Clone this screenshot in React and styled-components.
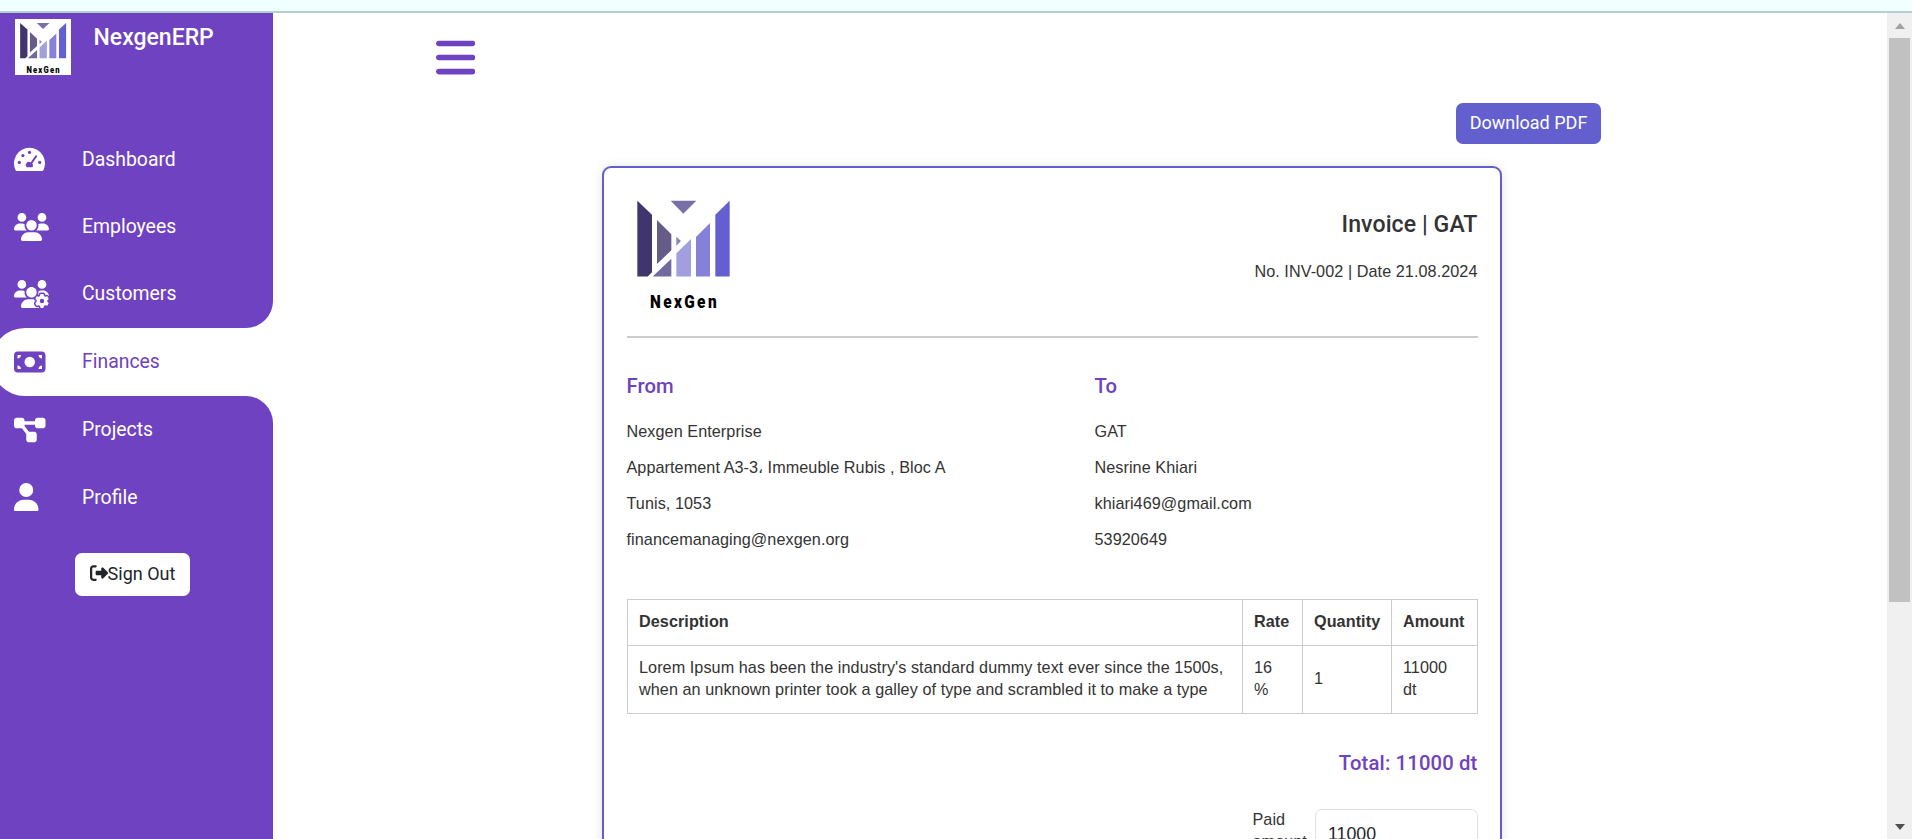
import React from "react";
import styled, { createGlobalStyle } from "styled-components";
import {
  FaUsers,
  FaUsersGear,
  FaMoneyBill,
  FaDiagramProject,
  FaUser,
  FaRightFromBracket,
  FaBars,
} from "react-icons/fa6";

const PURPLE = "#6f42c1";
const INDIGO = "#635fcf";

const GlobalStyle = createGlobalStyle`
  *, *::before, *::after { box-sizing: border-box; }
  html, body { margin: 0; height: 100%; overflow: hidden; background: #fff; }
  body { font-family: Roboto, "Liberation Sans", sans-serif; }
  h1, h2, p { margin: 0; }
`;

const Page = styled.div`
  display: flex;
  flex-direction: column;
  width: 1912px;
  height: 839px;
  overflow: hidden;
`;

const TopStrip = styled.div`
  flex: none;
  height: 13px;
  background: #f0ffff;
  border-bottom: 2px solid #b5cfcc;
`;

const Body = styled.div`
  display: flex;
  flex: 1;
  min-height: 0;
`;

const Sidebar = styled.aside`
  flex: none;
  display: flex;
  flex-direction: column;
  width: 273px;
  background: #fff;
`;

const SideTop = styled.div`
  height: 315px;
  background: ${PURPLE};
  border-bottom-right-radius: 27px;
`;

const SideBottom = styled.div`
  flex: 1;
  background: ${PURPLE};
  border-top-right-radius: 27px;
`;

const Brand = styled.div`
  display: flex;
  gap: 22.5px;
  height: 112.5px;
  padding: 6px 0 0 15px;
`;

const BrandName = styled.h1`
  padding-top: 5px;
  color: #fff;
  font-size: 23px;
  line-height: 27px;
  font-weight: 500;
`;

const NavItem = styled.a`
  display: flex;
  align-items: center;
  height: 67.4px;
  padding-left: 14px;
  color: #fff;
  font-size: 19.4px;
`;

const ActiveRow = styled.div`
  height: 68px;
  background: ${PURPLE};
  overflow: hidden;
`;

const ActivePill = styled(NavItem)`
  height: 68px;
  margin-left: -9px;
  padding: 0 0 1px 23px;
  border-radius: 34px 0 0 34px;
  background: #fff;
  color: ${PURPLE};
`;

const NavIcon = styled.span`
  display: flex;
  flex: none;
  align-items: center;
  width: 68px;

  svg {
    flex: none;
    width: ${(p) => p.$width}px;
    height: ${(p) => p.$height || 28}px;
  }
`;

const SignOut = styled.button`
  display: flex;
  align-items: center;
  justify-content: center;
  width: 115px;
  height: 43px;
  margin: 22.2px 0 0 75px;
  padding: 0 0 2px;
  border: 0;
  border-radius: 6.75px;
  background: #fff;
  color: #212529;
  font: 400 18px/27px Roboto, sans-serif;
`;

const Main = styled.main`
  flex: 1;
  min-width: 0;
  display: flex;
  flex-direction: column;
  overflow: hidden;
`;

const MenuToggle = styled.button`
  display: flex;
  flex: none;
  width: 40px;
  height: 45px;
  margin: 22px 0 0 162.5px;
  padding: 0;
  border: 0;
  background: none;
  color: ${PURPLE};

  svg {
    flex: none;
    width: 39.4px;
    height: 45px;
  }
`;

const Download = styled.button`
  flex: none;
  align-self: flex-end;
  width: 145px;
  height: 41px;
  margin: 23px 286px 22px 0;
  padding: 0 0 3px;
  border: 0;
  border-radius: 6.75px;
  background: ${INDIGO};
  color: #fff;
  font: 400 18px/27px Roboto, sans-serif;
`;

const Card = styled.section`
  flex: none;
  width: 900px;
  height: 760px;
  margin-left: 329px;
  padding: 24px 22.5px 0 22.5px;
  border: 2px solid ${INDIGO};
  border-radius: 9px;
  background: #fff;
  box-shadow: 0 0 11px rgba(0, 0, 0, 0.1);
  color: #333;
  font-family: "Liberation Sans", Arial, sans-serif;
  font-size: 16.2px;
  line-height: 22px;
  letter-spacing: 0.07px;
`;

const CardHeader = styled.header`
  display: flex;
  justify-content: space-between;
  height: 146px;
  border-bottom: 2px solid #ccc;
`;

const InvoiceInfo = styled.div`
  padding-top: 18px;
  text-align: right;
`;

const InvoiceTitle = styled.h2`
  font: 500 23.1px/30px Roboto, sans-serif;
`;

const InvoiceMeta = styled.p`
  padding-top: 20px;
`;

const Parties = styled.div`
  display: flex;
  padding-top: 36px;
`;

const Party = styled.div`
  width: ${(p) => p.$width}px;
  flex: none;
`;

const Heading = styled.h2`
  color: ${PURPLE};
  font: 500 20.25px/24px Roboto, sans-serif;
`;

const PartyLines = styled.div`
  display: flex;
  flex-direction: column;
  gap: 14px;
  padding-top: 22px;
`;

const Table = styled.table`
  width: 851px;
  margin-top: 49px;
  border-collapse: collapse;
  table-layout: fixed;
`;

const Cell = styled.td`
  padding: 10px 11px 13px 11.5px;
  border: 1px solid #ccc;
  text-align: left;
  font-weight: ${(p) => (p.$head ? 700 : 400)};
`;

const Total = styled(Heading)`
  margin-top: 37px;
  text-align: right;
  letter-spacing: 0.15px;
`;

const Payment = styled.div`
  display: flex;
  justify-content: flex-end;
  margin-top: 34px;
`;

const PaymentLabel = styled.label`
  width: 62px;
  margin-top: -1px;
`;

const PaymentInput = styled.input`
  width: 163px;
  height: 50px;
  padding: 0 12.5px;
  border: 1px solid #dee2e6;
  border-radius: 6.75px;
  background: #fff;
  color: #212529;
  font: 17.8px "Liberation Sans", Arial, sans-serif;
`;

const Scrollbar = styled.div`
  flex: none;
  display: flex;
  flex-direction: column;
  justify-content: space-between;
  align-items: center;
  width: 25px;
  padding: 10px 2px 9px;
  background: #f0f0f0;
`;

const Thumb = styled.div`
  width: 21px;
  height: 564px;
  margin: 9px 0 auto;
  background: #c1c1c1;
`;

const Arrow = styled.div`
  width: 0;
  height: 0;
  border: 5.5px solid transparent;
  border-width: ${(p) => (p.$down ? "6px 5.5px 0" : "0 5.5px 6px")};
  border-${(p) => (p.$down ? "top" : "bottom")}-color: ${(p) => (p.$down ? "#505050" : "#a3a3a3")};
`;

const LogoSvg = styled.svg`
  flex: none;
  display: block;
  background: #fff;
`;

function Logo({ width, height }) {
  return (
    <LogoSvg width={width} height={height} viewBox="681 577 337.5 362" preserveAspectRatio="none">
      <polygon fill="#41356e" points="712,603 756,645 756,818 743,831 712,831" />
      <polygon fill="#7a70a9" points="812,603 889,603 850,642" />
      <polygon fill="#655c88" points="771,661 814,704 814,752 771,793" />
      <polygon fill="#706a9e" points="814,777 814,831 758,831" />
      <polygon fill="#8a84b0" points="829,711 843,724 829,738" />
      <polygon fill="#a29fde" points="829,761 873,718 873,831 829,831" />
      <polygon fill="#8580d8" points="888,712 930,670 930,831 888,831" />
      <polygon fill="#635fd0" points="946,645 989,603 989,831 946,831" />
      <text
        transform="translate(750 925) scale(0.84 1)"
        fill="#000"
        fontFamily="Roboto, sans-serif"
        fontWeight="900"
        fontSize="55"
        letterSpacing="8.5"
      >
        NexGen
      </text>
    </LogoSvg>
  );
}

function GaugeIcon() {
  return (
    <svg viewBox="0 0 31 24" fill="currentColor">
      <path d="M2.9 24 A1.6 1.6 0 0 1 1.6 23.2 A15.5 15.5 0 1 1 29.4 23.2 A1.6 1.6 0 0 1 28.1 24 Z" />
      <g fill={PURPLE}>
        <circle cx="5.3" cy="15.4" r="1.6" />
        <circle cx="8.9" cy="8.6" r="1.6" />
        <circle cx="15.5" cy="5.4" r="1.6" />
        <circle cx="25.7" cy="15.4" r="1.6" />
        <path d="M12.5 20.2 A3.2 3.2 0 0 1 16.6 15.4 L21.3 8.7 A1 1 0 0 1 23 9.8 L18.3 16.5 A3.2 3.2 0 0 1 18.5 20.2 Z" />
      </g>
    </svg>
  );
}

const upperNav = [
  { label: "Dashboard", Icon: GaugeIcon, width: 31, height: 24 },
  { label: "Employees", Icon: FaUsers, width: 35 },
  { label: "Customers", Icon: FaUsersGear, width: 35 },
];

const lowerNav = [
  { label: "Projects", Icon: FaDiagramProject, width: 31.5 },
  { label: "Profile", Icon: FaUser, width: 24.5 },
];

const from = [
  "Nexgen Enterprise",
  "Appartement A3-3، Immeuble Rubis , Bloc A",
  "Tunis, 1053",
  "financemanaging@nexgen.org",
];

const to = ["GAT", "Nesrine Khiari", "khiari469@gmail.com", "53920649"];

function NavLinks({ items }) {
  return items.map(({ label, Icon, width, height }) => (
    <NavItem key={label}>
      <NavIcon $width={width} $height={height}>
        <Icon />
      </NavIcon>
      {label}
    </NavItem>
  ));
}

function PartyBlock({ title, lines, width }) {
  return (
    <Party $width={width}>
      <Heading>{title}</Heading>
      <PartyLines>
        {lines.map((line) => (
          <p key={line}>{line}</p>
        ))}
      </PartyLines>
    </Party>
  );
}

export default function App() {
  return (
    <Page>
      <GlobalStyle />
      <TopStrip />
      <Body>
        <Sidebar>
          <SideTop>
            <Brand>
              <Logo width="56" height="56" />
              <BrandName>NexgenERP</BrandName>
            </Brand>
            <NavLinks items={upperNav} />
          </SideTop>
          <ActiveRow>
            <ActivePill>
              <NavIcon $width={31.5}>
                <FaMoneyBill />
              </NavIcon>
              Finances
            </ActivePill>
          </ActiveRow>
          <SideBottom>
            <NavLinks items={lowerNav} />
            <SignOut>
              <FaRightFromBracket />
              Sign Out
            </SignOut>
          </SideBottom>
        </Sidebar>
        <Main>
          <MenuToggle aria-label="Toggle menu">
            <FaBars />
          </MenuToggle>
          <Download>Download PDF</Download>
          <Card>
            <CardHeader>
              <Logo width="112.5" height="120.6" />
              <InvoiceInfo>
                <InvoiceTitle>Invoice | GAT</InvoiceTitle>
                <InvoiceMeta>No. INV-002 | Date 21.08.2024</InvoiceMeta>
              </InvoiceInfo>
            </CardHeader>
            <Parties>
              <PartyBlock title="From" lines={from} width={468} />
              <PartyBlock title="To" lines={to} width={383} />
            </Parties>
            <Table>
              <colgroup>
                <col />
                <col width="60" />
                <col width="89" />
                <col width="86" />
              </colgroup>
              <tbody>
                <tr>
                  <Cell as="th" $head>Description</Cell>
                  <Cell as="th" $head>Rate</Cell>
                  <Cell as="th" $head>Quantity</Cell>
                  <Cell as="th" $head>Amount</Cell>
                </tr>
                <tr>
                  <Cell>
                    Lorem Ipsum has been the industry's standard dummy text ever since the 1500s,
                    <br />
                    when an unknown printer took a galley of type and scrambled it to make a type
                  </Cell>
                  <Cell>
                    16
                    <br />%
                  </Cell>
                  <Cell>1</Cell>
                  <Cell>
                    11000
                    <br />
                    dt
                  </Cell>
                </tr>
              </tbody>
            </Table>
            <Total>Total: 11000 dt</Total>
            <Payment>
              <PaymentLabel>
                Paid
                <br />
                amount
              </PaymentLabel>
              <PaymentInput defaultValue="11000" />
            </Payment>
          </Card>
        </Main>
        <Scrollbar>
          <Arrow />
          <Thumb />
          <Arrow $down />
        </Scrollbar>
      </Body>
    </Page>
  );
}
